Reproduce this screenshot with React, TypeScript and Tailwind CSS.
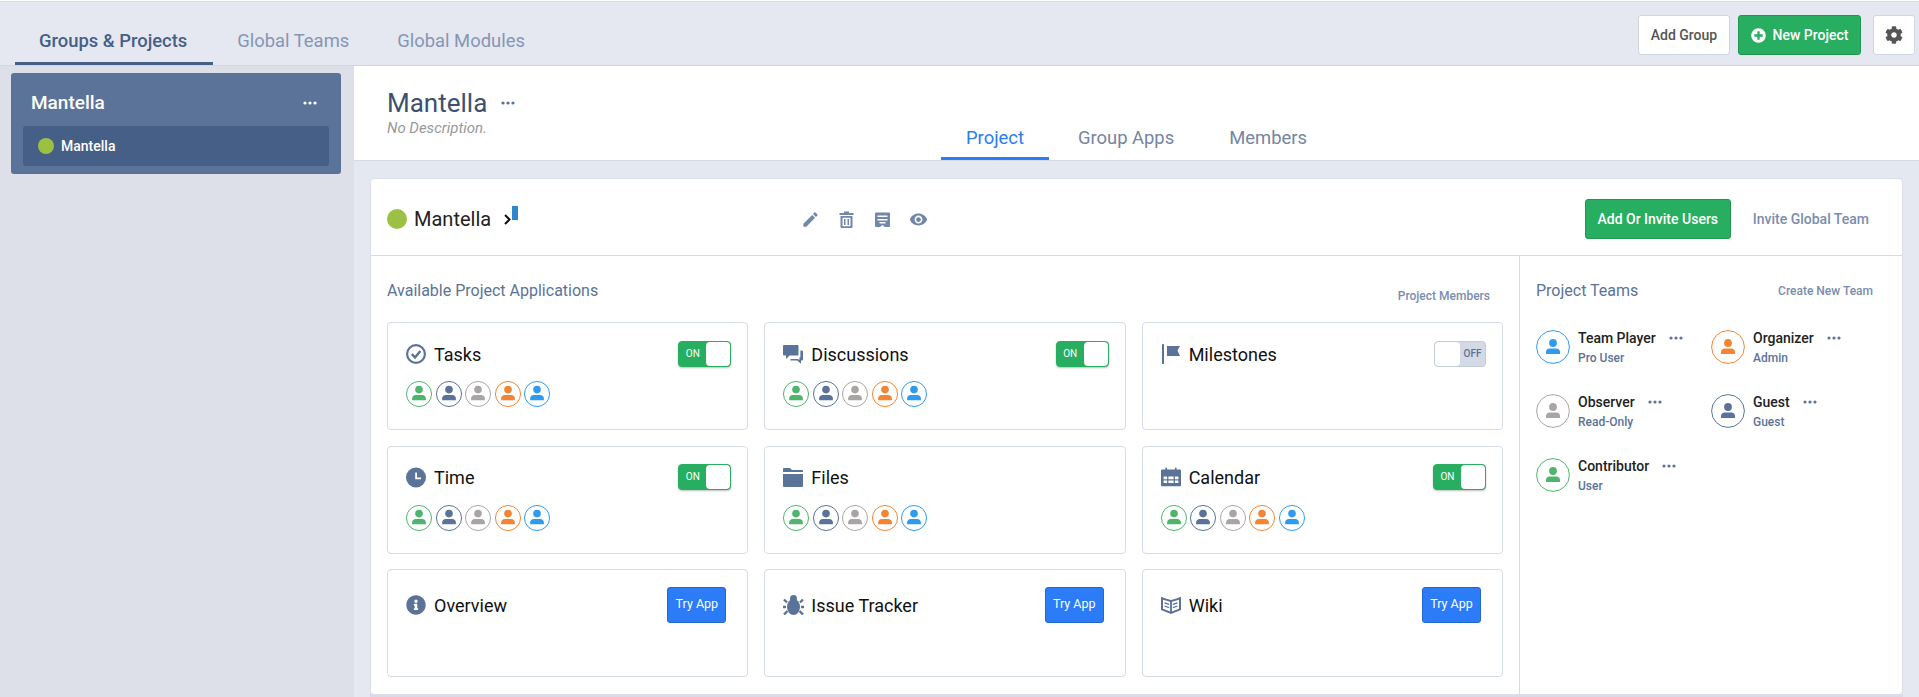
import { FaCog, FaInfoCircle, FaPlusCircle } from "react-icons/fa";
import { MdModeEdit, MdRemoveRedEye } from "react-icons/md";

const apps = [
  { name: "Tasks", icon: "tasks", toggle: "on", members: true },
  { name: "Discussions", icon: "discussions", toggle: "on", members: true },
  { name: "Milestones", icon: "milestones", toggle: "off", members: false },
  { name: "Time", icon: "time", toggle: "on", members: true },
  { name: "Files", icon: "files", toggle: "none", members: true },
  { name: "Calendar", icon: "calendar", toggle: "on", members: true },
  { name: "Overview", icon: "overview", toggle: "try", members: false },
  { name: "Issue Tracker", icon: "issue", toggle: "try", members: false },
  { name: "Wiki", icon: "wiki", toggle: "try", members: false },
];

const teams = [
  { name: "Team Player", role: "Pro User", color: "#2f9bef" },
  { name: "Organizer", role: "Admin", color: "#f28533" },
  { name: "Observer", role: "Read-Only", color: "#aaa5a5" },
  { name: "Guest", role: "Guest", color: "#5b7399" },
  { name: "Contributor", role: "User", color: "#4fb56c" },
];

const avatarColors = ["#4fb56c", "#5b7399", "#aaa5a5", "#f28533", "#2f9bef"];

function Dots({ color = "#5b7399" }: { color?: string }) {
  return (
    <svg width="14" height="4" viewBox="0 0 14 4" fill={color}>
      <circle cx="2" cy="2" r="1.6" />
      <circle cx="7" cy="2" r="1.6" />
      <circle cx="12" cy="2" r="1.6" />
    </svg>
  );
}

function Avatar({ color, size }: { color: string; size: number }) {
  const small = size < 30;
  return (
    <svg width={size} height={size} viewBox="0 0 34 34">
      <circle cx="17" cy="17" r="16.4" fill="#fff" stroke={color} strokeWidth={small ? 1.3 : 1} />
      <g transform={small ? "translate(17 17) scale(1.28) translate(-17 -17.5)" : undefined}>
        <circle cx="17" cy="13" r="3.9" fill={color} />
        <path d="M10 24v-2.2c0-2 1.6-3.3 3.6-3.3h6.8c2 0 3.6 1.3 3.6 3.3V24z" fill={color} />
      </g>
    </svg>
  );
}

function AppIcon({ type }: { type: string }) {
  const color = "#5b7399";
  if (type === "time")
    return (
      <svg width="20" height="21" viewBox="0 0 20 20" fill={color}>
        <circle cx="10" cy="10" r="10" />
        <path d="M9.2 5h1.8v5h4v1.8H9.2z" fill="#fff" />
      </svg>
    );
  if (type === "calendar")
    return (
      <svg width="20" height="20" viewBox="0 0 23 21" fill={color}>
        <path d="M5 0h2v2h9V0h2v2h4a1 1 0 0 1 1 1v17a1 1 0 0 1-1 1H1a1 1 0 0 1-1-1V3a1 1 0 0 1 1-1h4z" />
        <path d="M3 10h4v3H3zM8.5 10h6v3h-6zM16 10h4v3h-4zM3 14.500h4v3H3zM8.500 14.500h6v3h-6zM16 14.500h4v3h-4z" fill="#fff" />
      </svg>
    );
  if (type === "overview") return <FaInfoCircle size={20} color={color} />;
  if (type === "issue")
    return (
      <svg width="21" height="20" viewBox="0 0 21 20" fill={color} stroke={color}>
        <ellipse cx="10.500" cy="12" rx="6.500" ry="8" stroke="none" />
        <circle cx="10.500" cy="3.500" r="3.500" stroke="none" />
        <path d="M4 7.500L1 4.500M17 7.500l3-3M3 12H0M18 12h3M4.500 16L1 19.500M16.500 16l3.500 3.500" strokeWidth="2.400" fill="none" />
      </svg>
    );
  if (type === "tasks")
    return (
      <svg width="20" height="20" viewBox="0 0 20 20" fill="none" stroke={color}>
        <circle cx="10" cy="10" r="8.900" strokeWidth="2.200" />
        <path d="M5.800 10.200l3.200 3.200 5.400-6.400" strokeWidth="2.400" />
      </svg>
    );
  if (type === "discussions")
    return (
      <svg width="20" height="20" viewBox="0 0 20 20" fill={color}>
        <path d="M1 1h13.500a1 1 0 0 1 1 1v8.500a1 1 0 0 1-1 1H6.500L3 15v-3.500H1a1 1 0 0 1-1-1V2a1 1 0 0 1 1-1z" />
        <path d="M17.200 6.500H19a1 1 0 0 1 1 1v8a1 1 0 0 1-1 1h-1v3.200L14.200 16.500H7.500v-1.600h7.300l1.600 1V13.500h1V6.500z" />
      </svg>
    );
  if (type === "milestones")
    return (
      <svg width="20" height="20" viewBox="0 0 20 20" fill={color}>
        <rect x="1" y="0" width="2" height="20" rx="0.600" />
        <path d="M6 2h13l-2.500 4.500L19 12H6z" />
      </svg>
    );
  if (type === "files")
    return (
      <svg width="20" height="20" viewBox="0 0 20 20" fill={color}>
        <path d="M0 2a1 1 0 0 1 1-1h6l2 2h10a1 1 0 0 1 1 1v1H0z" />
        <path d="M0 7h20v12a1 1 0 0 1-1 1H1a1 1 0 0 1-1-1z" />
      </svg>
    );
  return (
    <svg width="20" height="20" viewBox="0 0 22 20" fill={color}>
      <path d="M0 1l5 1.800 6 1.700 6-1.700L22 1v14.500L11 20 0 15.500zM2.200 4.200v10l7.800 3V6.500zM19.800 4.200L12 6.500v10.700l7.800-3z" fillRule="evenodd" />
      <path d="M4 7l5 1.600v1.500L4 8.500zM4 10.500l5 1.600v1.500L4 12zM18 7l-5 1.600v1.500l5-1.600zM18 10.500l-5 1.600v1.500l5-1.600z" />
    </svg>
  );
}

function AppControl({ type }: { type: string }) {
  if (type === "on")
    return (
      <div className="flex h-[26px] w-[53px] rounded-[4px] border border-[#27ae60] bg-[#27ae60] shadow-[0_1px_2px_rgba(0,0,0,0.25)]">
        <span className="w-[27px] text-center text-[10px] leading-[24px] text-white">ON</span>
        <span className="flex-1 rounded-[4px] bg-white" />
      </div>
    );
  if (type === "off")
    return (
      <div className="flex h-[26px] w-[52px] rounded-[4px] border border-[#c3cbd9] bg-[#d3dae5]">
        <span className="w-[25px] rounded-[4px] bg-white" />
        <span className="flex-1 text-center text-[10px] font-medium leading-[24px] text-[#5b7399]">OFF</span>
      </div>
    );
  if (type === "try")
    return (
      <button className="mr-[5px] h-[36px] w-[59px] rounded-[3px] border border-[#2268d0] bg-[#2b7cf6] text-[12.5px] text-white">
        Try App
      </button>
    );
  return null;
}

function AppCard({ app }: { app: (typeof apps)[number] }) {
  const isTry = app.toggle === "try";
  return (
    <div className={`flex h-[108px] flex-col rounded-[4px] border border-[#d6dce7] bg-white pl-[18px] pr-[16px] ${isTry ? "pt-[21px]" : "pt-[17px]"}`}>
      <div className="flex h-[27px] items-center justify-between">
        <div className="flex items-center">
          <span className="flex w-[28px] shrink-0"><AppIcon type={app.icon} /></span>
          <span className="pt-[2px] text-[18px] leading-[24px] text-[#111]">{app.name}</span>
        </div>
        <AppControl type={app.toggle} />
      </div>
      {app.members && (
        <div className="mt-[14px] flex gap-[3.5px]">
          {avatarColors.map((c) => (
            <Avatar key={c} color={c} size={26} />
          ))}
        </div>
      )}
    </div>
  );
}

export default function App() {
  return (
    <div className="flex h-[697px] flex-col overflow-hidden bg-[#e5e8f1] font-['Roboto',sans-serif]">
      <div className="h-[2px] border-b border-[#d6dce7] bg-white" />

      {/* top tabs */}
      <div className="flex h-[64px] shrink-0 items-start justify-between border-b border-[#cfd5e1] pl-[15px] pr-[4px]">
        <div className="flex pt-[16px] text-[18.4px] leading-[45px]">
          <div className="h-[47px] border-b-[3px] border-[#465f87] pl-[24px] pr-[26px] font-medium text-[#465f87]">Groups &amp; Projects</div>
          <div className="px-[24px] text-[#8596b3]">Global Teams</div>
          <div className="px-[24px] text-[#8596b3]">Global Modules</div>
        </div>
        <div className="flex pt-[13px]">
          <button className="h-[40px] w-[92px] rounded-[3px] border border-[#cfd5e1] bg-white text-[14px] font-medium text-[#555]">
            Add Group
          </button>
          <button className="ml-[8px] flex h-[40px] w-[123px] items-center justify-center gap-[7px] rounded-[3px] border border-[#219653] bg-[#27ae60] text-[14px] font-medium text-white">
            <FaPlusCircle size={15} />
            New Project
          </button>
          <button className="ml-[12px] flex h-[40px] w-[42px] items-center justify-center rounded-[3px] border border-[#cfd5e1] bg-white text-[#555]">
            <FaCog size={18} />
          </button>
        </div>
      </div>

      <div className="flex min-h-0 flex-1">
        {/* sidebar */}
        <aside className="w-[354px] shrink-0 bg-[#dde0e9] pl-[11px] pr-[13px] pt-[7px]">
          <div className="h-[101px] rounded-[3px] bg-[#5b7399] px-[12px]">
            <div className="flex h-[53px] items-center justify-between pl-[8px] pr-[12px] pt-[7px] text-white">
              <span className="text-[19px] font-medium">Mantella</span>
              <Dots color="#fff" />
            </div>
            <div className="flex h-[40px] items-center gap-[7px] rounded-[3px] bg-[#465f87] pl-[15px] text-white">
              <span className="h-[16px] w-[16px] rounded-full bg-[#9bc044]" />
              <span className="text-[14px] font-medium">Mantella</span>
            </div>
          </div>
        </aside>

        <main className="flex min-w-0 flex-1 flex-col">
          {/* project header */}
          <div className="flex h-[95px] shrink-0 border-b border-[#d6dce7] bg-white pl-[33px]">
            <div className="w-[554px] shrink-0 pt-[21px]">
              <div className="flex items-center gap-[14px]">
                <span className="text-[26px] leading-[32px] text-[#3d5070]">Mantella</span>
                <Dots />
              </div>
              <div className="text-[15px] italic leading-[18px] text-[#999]">No Description.</div>
            </div>
            <div className="flex items-end text-[18.4px] leading-[24px]">
              <div className="h-[46px] border-b-[3px] border-[#2b7cf6] px-[25px] pt-[12px] text-[#2b7cf6]">Project</div>
              <div className="h-[46px] px-[29px] pt-[12px] text-[#75859f]">Group Apps</div>
              <div className="h-[46px] px-[26px] pt-[12px] text-[#75859f]">Members</div>
            </div>
          </div>

          {/* project card */}
          <div className="px-[16px] pt-[17px]">
            <div className="h-[517px] rounded-[4px] border border-[#d9dee8] bg-white shadow-[0_4px_0_#d8dce5]">
              <div className="flex h-[77px] items-center border-b border-[#d6dce7] pl-[16px] pr-[33px] pt-[4px]">
                <span className="h-[20px] w-[20px] rounded-full bg-[#9bc044]" />
                <span className="ml-[7px] text-[20px] text-[#222]">Mantella</span>
                <svg className="ml-[13px] mt-[1px]" width="7" height="11" viewBox="0 0 7 11" fill="none" stroke="#111" strokeWidth="2">
                  <path d="M1 1l4.500 4.500L1 10" />
                </svg>
                <span className="mb-[12px] ml-[1px] h-[14px] w-[6px] bg-[#2f86cf]" />
                <div className="ml-[283px] flex items-center gap-[17px] text-[#7187ab]">
                  <MdModeEdit size={19} />
                  <svg width="19" height="19" viewBox="0 0 19 19" fill="#7187ab">
                    <path d="M7 1.500h5V3h4.500v2h-14V3H7zM3.500 6h12v11a1 1 0 0 1-1 1h-10a1 1 0 0 1-1-1zm2 1.800V16.200h8V7.800z" fillRule="evenodd" />
                    <path d="M7 9h1.500v6H7zM10.500 9H12v6h-1.500z" />
                  </svg>
                  <svg width="19" height="19" viewBox="0 0 19 19" fill="#7187ab">
                    <path d="M3 2.500h13a1 1 0 0 1 1 1V16a1 1 0 0 1-1 1h-4l-2.500-2L7 17H3a1 1 0 0 1-1-1V3.500a1 1 0 0 1 1-1zM4.500 5.500V7h10V5.500zM4.500 9v1.500h10V9zM6.500 12v1.500h6V12z" fillRule="evenodd" />
                  </svg>
                  <MdRemoveRedEye size={19} />
                </div>
                <button className="ml-auto h-[40px] w-[146px] rounded-[3px] border border-[#219653] bg-[#27ae60] text-[14px] font-medium text-white">
                  Add Or Invite Users
                </button>
                <span className="ml-[22px] text-[14px] font-medium text-[#7a8db0]">Invite Global Team</span>
              </div>

              <div className="flex">
                <div className="w-[1148px] shrink-0 px-[16px]">
                  <div className="flex h-[66px] items-center justify-between pr-[13px] pt-[4px]">
                    <span className="text-[16px] text-[#5b7399]">Available Project Applications</span>
                    <span className="pt-[10px] text-[12px] font-medium text-[#7a8db0]">Project Members</span>
                  </div>
                  <div className="grid grid-cols-3 gap-x-[16px] gap-y-[15.5px]">
                    {apps.map((app) => (
                      <AppCard key={app.name} app={app} />
                    ))}
                  </div>
                </div>

                <div className="h-[438px] flex-1 border-l border-[#d6dce7] pl-[16px] pr-[29px]">
                  <div className="flex h-[66px] items-center justify-between pt-[4px]">
                    <span className="text-[16px] text-[#5b7399]">Project Teams</span>
                    <span className="text-[12px] font-medium text-[#7a8db0]">Create New Team</span>
                  </div>
                  <div className="mt-[8px] grid grid-cols-[175px_1fr] gap-y-[30px]">
                    {teams.map((t) => (
                      <div key={t.name} className="flex h-[34px] gap-[8px]">
                        <Avatar color={t.color} size={34} />
                        <div>
                          <div className="flex items-center gap-[13px] text-[14px] font-medium leading-[16px] text-[#222]">
                            {t.name}
                            <Dots />
                          </div>
                          <div className="mt-[5px] text-[12px] font-medium leading-[14px] text-[#5b7399]">{t.role}</div>
                        </div>
                      </div>
                    ))}
                  </div>
                </div>
              </div>
            </div>
          </div>
        </main>
      </div>
    </div>
  );
}
